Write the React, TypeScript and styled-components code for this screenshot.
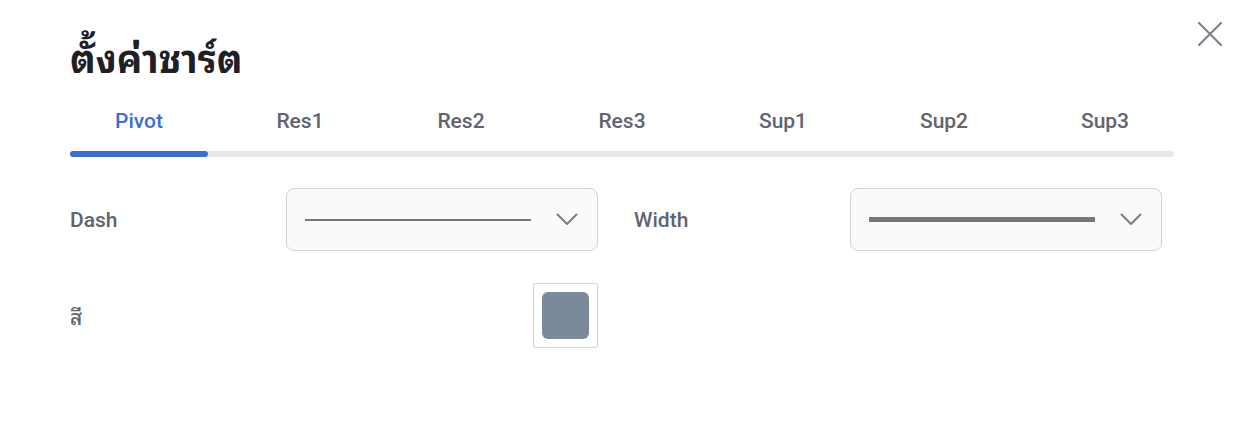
import React, { useState } from "react";
import styled, { createGlobalStyle } from "styled-components";

const FONT_STACK = `Roboto, "Noto Sans Thai Looped", "Noto Looped Thai", "Noto Looped Thai UI", "Noto Sans Thai UI", Loma, Garuda, "Noto Sans Thai", "Noto Sans", sans-serif`;

const GlobalStyle = createGlobalStyle`
  html, body { margin: 0; padding: 0; background: #ffffff; }
  body { font-family: ${FONT_STACK}; }
  * { box-sizing: border-box; }
`;

const Dialog = styled.div`
  position: relative;
  width: 1244px;
  height: 426px;
  padding: 36px 70px 0 70px;
  background: #ffffff;
`;

const CloseButton = styled.button`
  position: absolute;
  top: 22px;
  right: 22px;
  width: 24px;
  height: 24px;
  padding: 0;
  border: none;
  background: transparent;
  cursor: pointer;
  display: flex;
  align-items: center;
  justify-content: center;
`;

const Title = styled.h1`
  margin: 0;
  font-family: ${FONT_STACK};
  font-size: 38px;
  line-height: 48px;
  font-weight: 700;
  color: #1f2024;
`;

const Tabs = styled.div`
  width: 1104px;
  margin-top: 12px;
`;

const TabList = styled.div`
  display: grid;
  grid-template-columns: repeat(7, 138px);
  column-gap: 23px;
`;

const Tab = styled.button<{ $active: boolean }>`
  border: none;
  background: transparent;
  padding: 12px 0;
  font-family: ${FONT_STACK};
  font-size: 21px;
  line-height: 26px;
  font-weight: 500;
  color: ${(p) => (p.$active ? "#3a6fd8" : "#5f6470")};
  text-align: center;
  cursor: pointer;
`;

const Track = styled.div`
  margin-top: 5px;
  height: 6px;
  border-radius: 3px;
  background: #e8e8ea;
  display: flex;
`;

const Indicator = styled.div`
  width: 138px;
  height: 6px;
  border-radius: 3px;
  background: #3a6fd8;
`;

const Form = styled.div`
  margin-top: 31px;
  display: flex;
  flex-direction: column;
  gap: 32px;
`;

const Row = styled.div`
  display: flex;
  gap: 36px;
`;

const Field = styled.div`
  display: grid;
  grid-template-columns: 216px 312px;
  align-items: center;
`;

const Label = styled.span`
  font-size: 21px;
  font-weight: 500;
  color: #5f6470;
`;

const Select = styled.button`
  width: 312px;
  height: 63px;
  padding: 0 19px 0 18px;
  border: 1px solid #d2d3d7;
  border-radius: 8px;
  background: #fafafa;
  display: flex;
  align-items: center;
  justify-content: space-between;
  cursor: pointer;
`;

const LineSample = styled.div<{ $thickness: number }>`
  width: 226px;
  height: ${(p) => p.$thickness}px;
  background: #777777;
`;

const SwatchCell = styled.div`
  display: flex;
  justify-content: flex-end;
`;

const SwatchBox = styled.button`
  width: 65px;
  height: 65px;
  padding: 8px;
  border: 1px solid #d2d3d7;
  border-radius: 2px;
  background: #ffffff;
  cursor: pointer;
`;

const SwatchColor = styled.div<{ $color: string }>`
  width: 47px;
  height: 47px;
  border-radius: 6px;
  background: ${(p) => p.$color};
`;

const Chevron = () => (
  <svg width="22" height="13" viewBox="0 0 22 13" fill="none">
    <polyline points="1.5,1.5 11,11 20.5,1.5" stroke="#7a7d86" strokeWidth="2" strokeLinecap="round" strokeLinejoin="round" />
  </svg>
);

const tabs = ["Pivot", "Res1", "Res2", "Res3", "Sup1", "Sup2", "Sup3"];

export default function App() {
  const [active, setActive] = useState(0);
  return (
    <>
      <GlobalStyle />
      <Dialog>
        <CloseButton aria-label="close">
          <svg width="24" height="24" viewBox="0 0 24 24" fill="none">
            <path d="M1 1 L23 23 M23 1 L1 23" stroke="#7a7d86" strokeWidth="2" strokeLinecap="round" />
          </svg>
        </CloseButton>
        <Title>ตั้งค่าชาร์ต</Title>
        <Tabs>
          <TabList>
            {tabs.map((t, i) => (
              <Tab key={t} $active={i === active} onClick={() => setActive(i)}>
                {t}
              </Tab>
            ))}
          </TabList>
          <Track>
            <Indicator style={{ marginLeft: active * 161 }} />
          </Track>
        </Tabs>
        <Form>
          <Row>
            <Field>
              <Label>Dash</Label>
              <Select>
                <LineSample $thickness={2} />
                <Chevron />
              </Select>
            </Field>
            <Field>
              <Label>Width</Label>
              <Select>
                <LineSample $thickness={5} />
                <Chevron />
              </Select>
            </Field>
          </Row>
          <Row>
            <Field>
              <Label>สี</Label>
              <SwatchCell>
                <SwatchBox>
                  <SwatchColor $color="#7a8a9a" />
                </SwatchBox>
              </SwatchCell>
            </Field>
          </Row>
        </Form>
      </Dialog>
    </>
  );
}
